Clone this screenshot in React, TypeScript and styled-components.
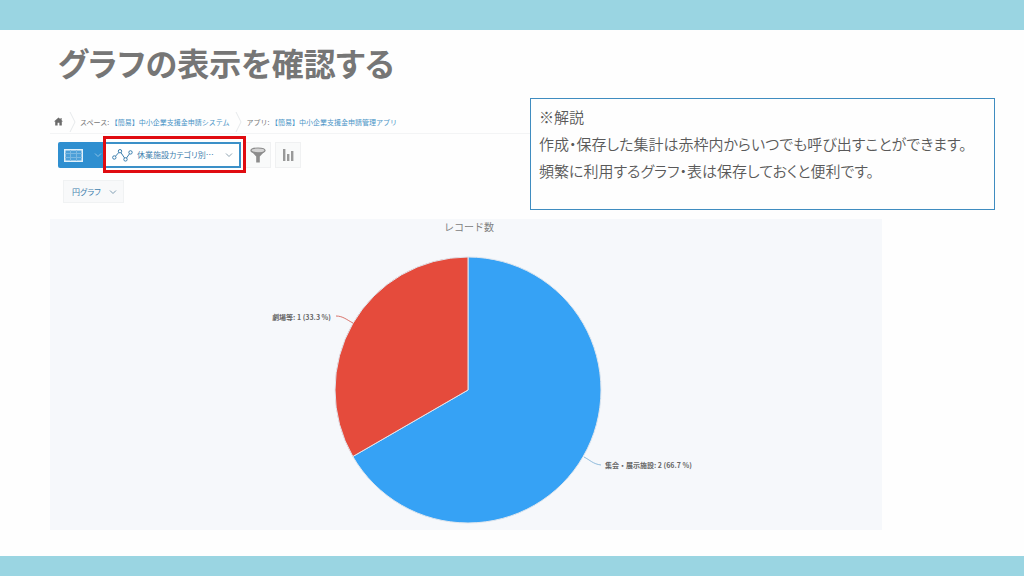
import React from "react";
import styled, { createGlobalStyle } from "styled-components";

const GlobalStyle = createGlobalStyle`
  * { box-sizing: border-box; }
  body {
    margin: 0;
    background: #fefefe;
    font-family: "Noto Sans CJK JP", sans-serif;
    color: #595959;
  }
`;

const Slide = styled.div`
  min-height: 100vh;
  display: flex;
  flex-direction: column;
`;

const Band = styled.div<{ $height: number }>`
  height: ${(p) => p.$height}px;
  background: #9ad5e2;
`;

const Main = styled.main`
  flex: 1;
  padding: 8px 29px 26px 50px;
`;

const Title = styled.h1`
  margin: 0;
  padding-left: 8px;
  font-size: 32px;
  line-height: 48px;
  font-weight: 700;
  font-feature-settings: "palt";
  color: #767676;
`;

const TopRow = styled.div`
  display: flex;
  align-items: flex-start;
  margin-top: 12px;
  height: 121px;
`;

const AppHeader = styled.div`
  flex: 1;
  min-width: 0;
  padding-top: 12px;
`;

const Crumbs = styled.nav`
  display: flex;
  align-items: center;
  height: 24px;
  padding-left: 4px;
  border-bottom: 1px solid #f3f4f5;
  font-size: 7px;
  line-height: 12px;
  color: #777777;
  white-space: nowrap;
`;

const CrumbLink = styled.a`
  color: #4a94c6;
  text-decoration: none;
`;

const Separator = styled.svg`
  width: 8px;
  height: 20px;
  margin: 0 3px 0 6px;
  fill: none;
  stroke: #e6e9eb;
`;

const Toolbar = styled.div`
  display: flex;
  align-items: center;
  height: 26px;
  margin: 8px 0 0 8px;
`;

const ViewButton = styled.button`
  display: flex;
  align-items: center;
  justify-content: space-between;
  width: 46px;
  height: 26px;
  padding: 0 2px 0 6px;
  border: 0;
  border-radius: 2px 0 0 2px;
  background: #2f8fd0;
`;

const Highlight = styled.div`
  position: relative;
  display: flex;
  align-items: center;
  width: 137px;
  height: 26px;
  padding: 0 6px;
  border: 2px solid #3b90c8;
  background: #ffffff;

  &::after {
    content: "";
    position: absolute;
    inset: -8px -7px -7px -3px;
    border: 3px solid #e00b10;
    pointer-events: none;
  }
`;

const Select = styled.select`
  appearance: none;
  border: 0;
  padding: 0;
  background: transparent;
  font-family: "Noto Sans CJK JP", sans-serif;
  font-size: 8px;
  line-height: 16px;
  font-feature-settings: "palt";
  color: #3f7fae;
`;

const ReportSelect = styled(Select)`
  flex: 1;
  min-width: 0;
  margin-left: 4px;
`;

const IconButton = styled.button`
  display: flex;
  align-items: center;
  justify-content: center;
  width: 26px;
  height: 26px;
  margin-left: 4px;
  padding: 0;
  border: 1px solid #f0f1f2;
  background: #f9fafa;
`;

const ChartType = styled.div`
  display: inline-flex;
  align-items: center;
  justify-content: space-between;
  width: 61px;
  height: 23px;
  margin: 12px 0 0 13px;
  padding: 0 6px 0 8px;
  border: 1px solid #f0f2f3;
  background: #f8f9fa;
`;

const Note = styled.aside`
  width: 465px;
  height: 112px;
  padding: 4px 8px;
  border: 1px solid #3f8cc0;
  background: #fefefe;
  font-size: 15px;
  line-height: 27px;
  font-weight: 350;
  font-feature-settings: "palt";
  white-space: nowrap;

  p { margin: 0; }
`;

const ChartPanel = styled.section`
  margin-right: 113px;
  background: #f6f8fb;
`;

const Chart = styled.svg`
  display: block;
  width: 100%;
  height: auto;
`;

const Chevron = ({ color }: { color: string }) => (
  <svg width="8" height="6" viewBox="0 0 8 6" fill="none" stroke={color} aria-hidden="true">
    <path d="M1 1.5 4 4.5 7 1.5" />
  </svg>
);

const CrumbArrow = () => (
  <Separator viewBox="0 0 8 20" aria-hidden="true">
    <path d="M1 0 6 10 1 20" />
  </Separator>
);

const CX = 418;
const CY = 171;
const R = 133;

const point = (deg: number) => {
  const a = ((deg - 90) * Math.PI) / 180;
  return `${CX + R * Math.cos(a)} ${CY + R * Math.sin(a)}`;
};

const slice = (from: number, to: number) =>
  `M${CX} ${CY}L${point(from)}A${R} ${R} 0 ${to - from > 180 ? 1 : 0} 1 ${point(to)}Z`;

export default function App() {
  return (
    <Slide>
      <GlobalStyle />
      <Band $height={30} />
      <Main>
        <Title>グラフの表示を確認する</Title>
        <TopRow>
          <AppHeader>
            <Crumbs>
              <svg width="9" height="9" viewBox="0 0 9 9" fill="#6b6b6b" aria-hidden="true">
                <path d="M4.5 0.5 0 4.6h1.2V8.5h2.4V5.7h1.8v2.8h2.4V4.6H9L7.6 3.3V1H6.5v1.3z" />
              </svg>
              <CrumbArrow />
              <span>スペース:&nbsp;</span>
              <CrumbLink href="#space">【簡易】中小企業支援金申請システム</CrumbLink>
              <CrumbArrow />
              <span>アプリ:&nbsp;</span>
              <CrumbLink href="#app">【簡易】中小企業支援金申請管理アプリ</CrumbLink>
            </Crumbs>
            <Toolbar>
              <ViewButton aria-label="一覧">
                <svg width="19" height="13" viewBox="0 0 19 13" aria-hidden="true">
                  <rect x="0.75" y="0.75" width="17.5" height="11.5" fill="#4c9fd8" stroke="#e3f1fa" strokeWidth="1.5" />
                  <path d="M1 4.5h17M1 8.5h17M6.5 1v11M12.5 1v11" stroke="#7ab8e2" />
                </svg>
                <Chevron color="#8cc2e6" />
              </ViewButton>
              <Highlight>
                <svg width="21" height="14" viewBox="0 0 21 14" fill="#ffffff" stroke="#3c7fae" aria-hidden="true">
                  <path d="M2.3 9.5 8 3.2 13.5 11.4 18.5 4.4" fill="none" />
                  <circle cx="2.3" cy="9.5" r="1.7" />
                  <circle cx="8" cy="3.2" r="1.7" />
                  <circle cx="13.5" cy="11.4" r="1.7" />
                  <circle cx="18.5" cy="4.4" r="1.7" />
                </svg>
                <ReportSelect aria-label="集計">
                  <option>休業施設カテゴリ別…</option>
                </ReportSelect>
                <Chevron color="#8fa3b1" />
              </Highlight>
              <IconButton aria-label="絞り込み">
                <svg width="16" height="16" viewBox="0 0 16 16" aria-hidden="true">
                  <path d="M0.5 3.5 6.2 9.5V15.5h3.6V9.5L15.5 3.5z" fill="#8c8c8c" />
                  <ellipse cx="8" cy="3.4" rx="7" ry="2.4" fill="#d4d4d4" stroke="#8c8c8c" strokeWidth="1.2" />
                </svg>
              </IconButton>
              <IconButton aria-label="グラフ">
                <svg width="12" height="12" viewBox="0 0 12 12" fill="#999999" aria-hidden="true">
                  <path d="M1 0h2.4v12H1zM5 5h2.400v7H5zM9 2h2.400v10H9z" />
                </svg>
              </IconButton>
            </Toolbar>
            <ChartType>
              <Select aria-label="グラフの種類">
                <option>円グラフ</option>
              </Select>
              <Chevron color="#7f9db3" />
            </ChartType>
          </AppHeader>
          <Note>
            <p>※解説</p>
            <p>作成・保存した集計は赤枠内からいつでも呼び出すことができます。</p>
            <p>頻繁に利用するグラフ・表は保存しておくと便利です。</p>
          </Note>
        </TopRow>
        <ChartPanel>
          <Chart viewBox="0 0 832 311" role="img" aria-label="レコード数">
            <text x="419" y="12" fontSize="10" textAnchor="middle" fill="#808080">レコード数</text>
            <path d={slice(0, 240)} fill="#36a2f5" stroke="#dfe6ee" />
            <path d={slice(240, 360)} fill="#e54b3c" stroke="#dfe6ee" />
            <path d="M286 97C293 97 297 101 303 104" fill="none" stroke="#d9756c" />
            <path d="M534 238C540 241 543 245 551 246" fill="none" stroke="#8fbbdc" />
            <text x="281" y="101" fontSize="7" fontWeight="700" textAnchor="end" fill="#666666">劇場等: 1 (33.3 %)</text>
            <text x="555" y="249" fontSize="7" fontWeight="700" fill="#666666">集会・展示施設: 2 (66.7 %)</text>
          </Chart>
        </ChartPanel>
      </Main>
      <Band $height={20} />
    </Slide>
  );
}
